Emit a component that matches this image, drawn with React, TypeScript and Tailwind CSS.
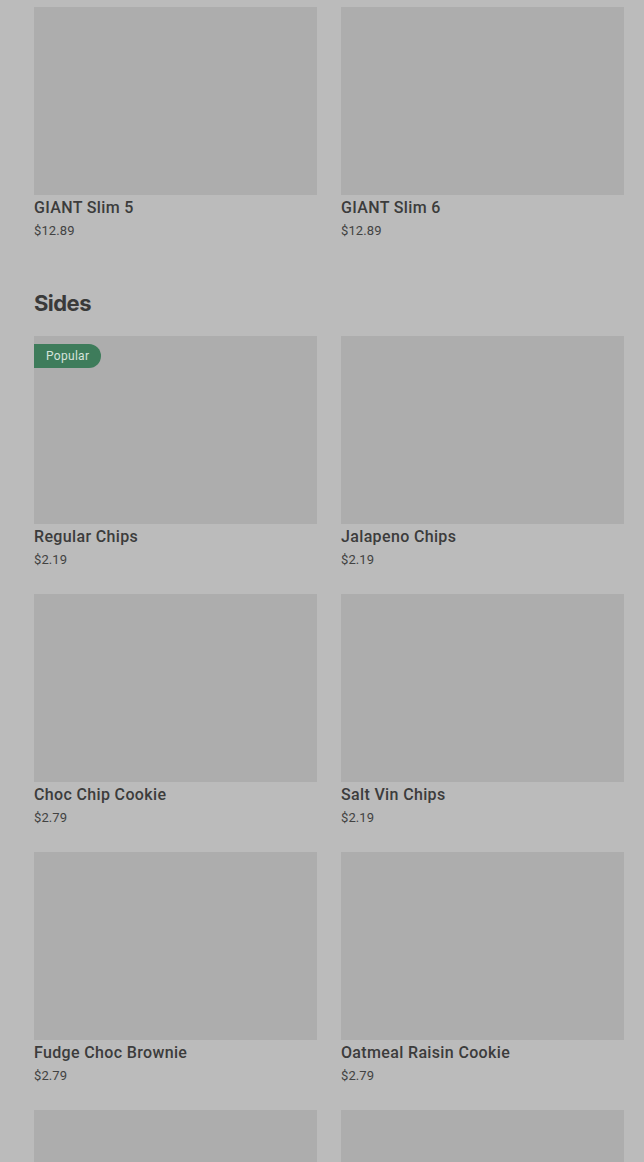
import React from 'react';

type Item = { name: string; price: string; popular?: boolean };

const topRow: Item[] = [
    { name: 'GIANT Slim 5', price: '$12.89' },
    { name: 'GIANT Slim 6', price: '$12.89' },
];

const sides: Item[] = [
    { name: 'Regular Chips', price: '$2.19', popular: true },
    { name: 'Jalapeno Chips', price: '$2.19' },
    { name: 'Choc Chip Cookie', price: '$2.79' },
    { name: 'Salt Vin Chips', price: '$2.19' },
    { name: 'Fudge Choc Brownie', price: '$2.79' },
    { name: 'Oatmeal Raisin Cookie', price: '$2.79' },
    { name: '', price: '' },
    { name: '', price: '' },
];

function MenuCard({ item }: { item: Item }) {
    return (
        <div className="flex flex-col">
            <div className="relative h-[188px] bg-[#adadad]">
                {item.popular && (
                    <span className="absolute left-0 top-2 h-6 pl-3 pr-3 flex items-center rounded-r-full bg-[#3e7c5b] text-[12px] text-[#d5e3db] tracking-wide">
                        Popular
                    </span>
                )}
            </div>
            {item.name && (
                <>
                    <p className="mt-[1px] text-[16px] leading-6 font-medium text-[#3c3c3c] tracking-[0.35px]">{item.name}</p>
                    <p className="mt-[1px] text-[13px] leading-5 text-[#424242] tracking-[0.1px]">{item.price}</p>
                </>
            )}
        </div>
    );
}

export default function App() {
    return (
        <div
            className="w-[644px] h-[1162px] overflow-hidden bg-[#bbbbbb] pl-[34px] pr-5 pt-[7px]"
            style={{ fontFamily: 'Roboto, "Noto Sans", sans-serif' }}
        >
            {/* previous category */}
            <div className="grid grid-cols-2 gap-x-6">
                {topRow.map((item) => (
                    <MenuCard key={item.name} item={item} />
                ))}
            </div>

            {/* Sides */}
            <h2
                className="mt-[46px] mb-[17px] text-[22px] leading-8 font-bold text-[#3a3a3a] tracking-tight"
                style={{ fontFamily: 'Inter, sans-serif' }}
            >
                Sides
            </h2>
            <div className="grid grid-cols-2 gap-x-6 gap-y-6">
                {sides.map((item, i) => (
                    <MenuCard key={i} item={item} />
                ))}
            </div>
        </div>
    );
}
